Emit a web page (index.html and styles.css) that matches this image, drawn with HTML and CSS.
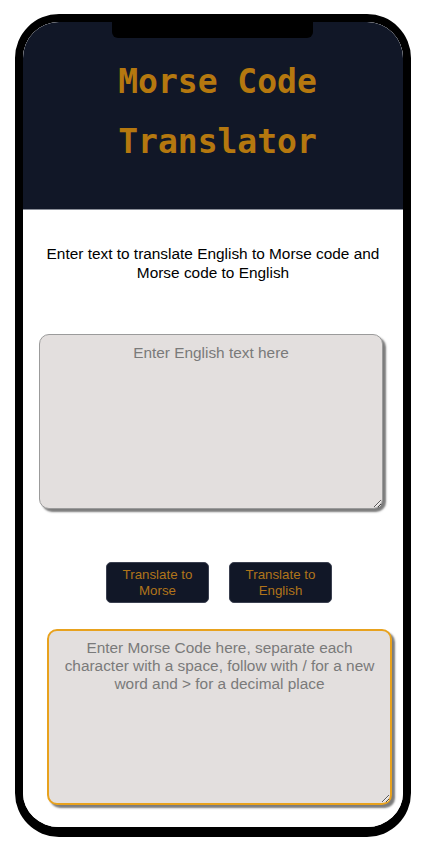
FILE: index.html
```html
<!DOCTYPE html>
<html lang="en">
<head>
<meta charset="utf-8">
<title>Morse Code Translator</title>
<link rel="stylesheet" href="styles.css">
</head>
<body>
<div class="phone">
  <div class="notch"></div>
  <div class="screen">
    <header class="header">
      <h1 class="title">Morse Code Translator</h1>
    </header>
    <p class="intro">Enter text to translate English to Morse code and Morse code to English</p>
    <textarea class="box box-english" placeholder="Enter English text here"></textarea>
    <div class="actions">
      <button class="btn">Translate to Morse</button>
      <button class="btn">Translate to English</button>
    </div>
    <textarea class="box box-morse" placeholder="Enter Morse Code here, separate each character with a space, follow with / for a new word and &gt; for a decimal place"></textarea>
  </div>
</div>
</body>
</html>
```

FILE: styles.css
```css
html, body {
  margin: 0;
  padding: 0;
  background: #ffffff;
}

.phone {
  position: relative;
  margin: 14px 0 0 15px;
  width: 396px;
  height: 823px;
  box-sizing: border-box;
  border: 8px solid #000;
  border-bottom-width: 10px;
  border-radius: 44px;
  overflow: hidden;
  background: #fff;
}

.notch {
  position: absolute;
  top: 0;
  left: 89px;
  width: 201px;
  height: 16px;
  background: #000;
  border-radius: 0 0 6px 6px;
  z-index: 2;
}

.screen {
  height: 100%;
  background: #fff;
}

.header {
  background: #111727;
  padding: 30px 0 37px 9px;
  border-bottom: 1px solid #8a8e98;
}

.title {
  margin: 0;
  font-family: "DejaVu Sans Mono", "Liberation Mono", monospace;
  font-weight: bold;
  font-size: 33px;
  line-height: 60px;
  color: #b5780f;
  text-align: center;
}

.intro {
  margin: 35px 0 0;
  padding: 0 16px;
  font-family: "Liberation Sans", Arial, sans-serif;
  font-size: 15.4px;
  line-height: 18.5px;
  color: #000;
  text-align: center;
}

.box {
  display: block;
  box-sizing: border-box;
  background: #e3dfde;
  border-radius: 10px;
  padding: 9px 10px;
  font-family: "Liberation Sans", Arial, sans-serif;
  font-size: 15.4px;
  line-height: 18px;
  text-align: center;
  color: #333;
  box-shadow: 3px 3px 2px #7c7c7c;
  outline: none;
}

.box::placeholder {
  color: #7a7a7a;
  opacity: 1;
}

.box-english {
  margin: 52px 0 0 16px;
  width: 344px;
  height: 175px;
  border: 1px solid #9b9b9b;
}

.actions {
  display: flex;
  justify-content: center;
  gap: 20px;
  margin-top: 53px;
  padding-left: 12px;
}

.btn {
  width: 103px;
  height: 41px;
  padding: 0;
  background: #111727;
  color: #b0741a;
  border: 1px solid #3b4050;
  border-radius: 5px;
  font-family: "Liberation Sans", Arial, sans-serif;
  font-size: 13.33px;
  line-height: 16px;
}

.box-morse {
  margin: 26px 0 0 24px;
  width: 345px;
  height: 176px;
  border: 2px solid #e8a21e;
  padding-top: 8px;
}
```
